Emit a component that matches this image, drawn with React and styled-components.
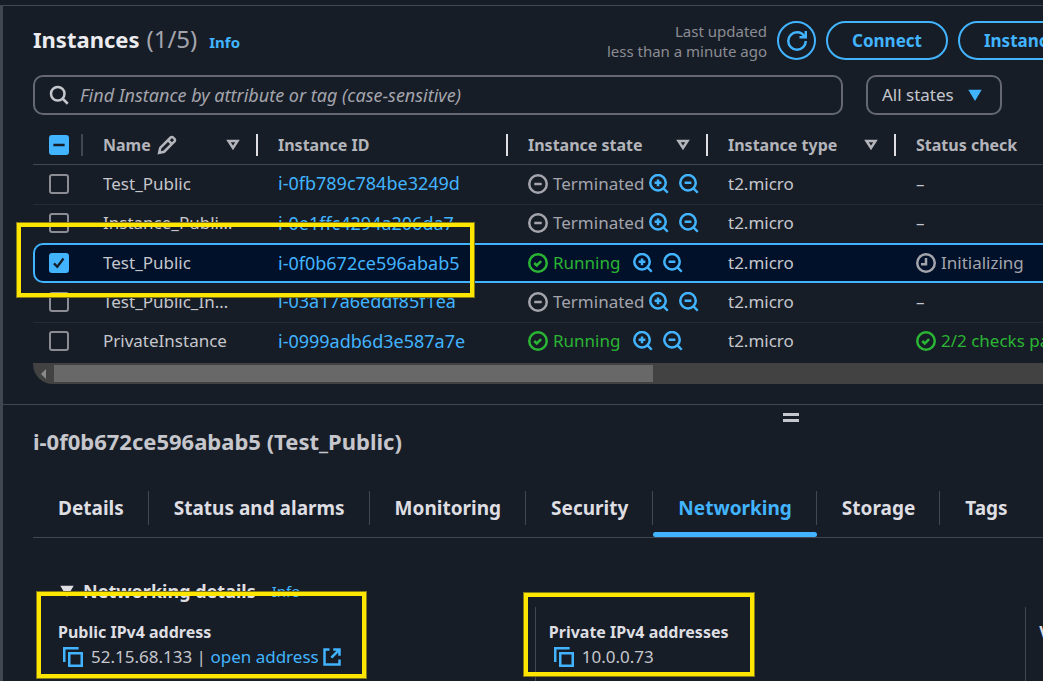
import React from "react";
import styled, { createGlobalStyle, css } from "styled-components";

const c = {
  bg: "#161d26",
  line: "#424650",
  rowLine: "#232b37",
  text: "#c6c6cd",
  strong: "#dedee3",
  muted: "#a4a4ad",
  blue: "#42b4ff",
  green: "#2bb534",
  control: "#656871",
  selected: "#001129",
  mark: "#ffe600",
};

const GlobalStyle = createGlobalStyle`
  *, *::before, *::after { box-sizing: border-box; }
  body {
    margin: 0;
    background: ${c.bg};
    color: ${c.text};
    font-family: "Noto Sans", "Open Sans", sans-serif;
    font-size: 17px;
    line-height: 24px;
    overflow: hidden;
  }
  button, input, select { font: inherit; color: inherit; }
  h1, h2, h3, dl, dt, dd { margin: 0; }
  a { color: ${c.blue}; text-decoration: none; }
`;

/* ---------- icons ---------- */

const Svg = styled.svg`
  display: block;
  flex: none;
  width: ${(p) => p.$size || 20}px;
  height: ${(p) => p.$size || 20}px;
  fill: none;
  stroke: currentColor;
  stroke-width: 2;
  color: ${(p) => p.$color || "inherit"};
`;

const shapes = {
  search: (
    <>
      <circle cx="7" cy="7" r="5.4" />
      <path d="m15 15-4.2-4.2" />
    </>
  ),
  refresh: (
    <>
      <path d="M15 8c0 3.87-3.13 7-7 7s-7-3.13-7-7 3.13-7 7-7c2.79 0 5.2 1.63 6.33 4" />
      <path d="M10 5h5V0" />
    </>
  ),
  edit: (
    <>
      <path d="m1.7 14.3.9-4L10.9 2a1.4 1.4 0 0 1 2 0l1.1 1.1a1.4 1.4 0 0 1 0 2L5.7 13.4Z" />
      <path d="m8.9 4.2 2.9 2.9" />
    </>
  ),
  zoomIn: (
    <>
      <circle cx="7.2" cy="7" r="6.2" />
      <path d="m15 15-3.4-3.5M7.2 4.3v5.4M4.500 7h5.4" />
    </>
  ),
  zoomOut: (
    <>
      <circle cx="7.2" cy="7" r="6.2" />
      <path d="m15 15-3.4-3.5M4.5 7h5.4" />
    </>
  ),
  stopped: (
    <>
      <circle cx="8" cy="8" r="7" />
      <path d="M11 8H5" />
    </>
  ),
  success: (
    <>
      <circle cx="8" cy="8" r="7" />
      <path d="m5 8 2 2 3.521-3.521" />
    </>
  ),
  pending: (
    <>
      <circle cx="8" cy="8" r="7" />
      <path d="M8 4v5H4" />
    </>
  ),
  copy: (
    <>
      <path d="M15 5H5v10h10V5Z" />
      <path d="M12.5 1H1v11" />
    </>
  ),
  external: (
    <>
      <path d="M6 2H2v12h12v-4" />
      <path d="M9 2h5v5M7.5 8.5l6-6" />
    </>
  ),
  caret: <path d="M4.4 4.8h7.2L8 10.3Z" />,
  caretFilled: <path d="M4.4 4.8h7.2L8 10.8Z" fill="currentColor" />,
  tick: <path d="m3.5 8.3 3 3 5.5-7.3" />,
  dash: <path d="M3.5 8h9" />,
};

const Icon = ({ name, size, color }) => (
  <Svg viewBox="0 0 16 16" aria-hidden="true" $size={size} $color={color}>
    {shapes[name]}
  </Svg>
);

/* ---------- frame ---------- */

const Page = styled.div`
  position: relative;
  min-height: 100vh;
  padding-top: 5px;
  overflow: hidden;
`;

const Shell = styled.main`
  min-height: calc(100vh - 5px);
  border-top: 1px solid ${c.line};
  border-left: 3px solid ${c.line};
`;

const ListPanel = styled.section`
  padding: 15px 0 20px 30px;
`;

const Header = styled.header`
  display: flex;
  gap: 10px;
  height: 39px;
`;

const Lead = styled.div`
  flex: none;
  width: calc(100% - 276px);
  display: flex;
  align-items: center;
  justify-content: space-between;
`;

const Title = styled.h1`
  display: flex;
  align-items: baseline;
  font-size: 22px;
  line-height: 32px;
  color: #ebebf0;
`;

const Count = styled.span`
  margin-left: 7px;
  font-size: 24px;
  font-weight: 400;
  color: ${c.muted};
`;

const Info = styled.a`
  margin-left: ${(p) => (p.$light ? 16 : 12)}px;
  font-size: 15px;
  font-weight: ${(p) => (p.$light ? 400 : 700)};
`;

const Updated = styled.p`
  margin: 0;
  font-size: 15px;
  line-height: 20px;
  text-align: right;
  color: #8c8c94;
`;

const Button = styled.button`
  flex: none;
  display: flex;
  align-items: center;
  justify-content: center;
  height: 39px;
  padding: ${(p) => (p.$round ? "0" : "0 24px")};
  width: ${(p) => (p.$round ? "39px" : "auto")};
  border: 2px solid ${c.blue};
  border-radius: 20px;
  background: transparent;
  color: ${c.blue};
  font-weight: 700;
  white-space: nowrap;
`;

const Filters = styled.div`
  display: flex;
  gap: 23px;
  margin: 15px 41px 0 0;
`;

const field = css`
  height: 40px;
  border: 2px solid ${c.control};
  border-radius: 10px;
`;

const SearchBox = styled.label`
  ${field}
  flex: 1;
  display: flex;
  align-items: center;
  gap: 11px;
  padding: 0 14px;
`;

const SearchInput = styled.input`
  flex: 1;
  min-width: 0;
  padding: 0;
  border: 0;
  outline: 0;
  background: transparent;
  font-size: 18px;
  &::placeholder {
    color: ${c.muted};
    font-style: italic;
    opacity: 1;
  }
`;

const SelectBox = styled.label`
  display: grid;
  align-items: center;
  width: 136px;
  > * { grid-area: 1 / 1; }
  > svg {
    justify-self: end;
    margin-right: 17px;
    pointer-events: none;
  }
`;

const Select = styled.select`
  ${field}
  appearance: none;
  width: 100%;
  padding: 0 14px;
  background: transparent;
`;

/* ---------- table ---------- */

const TableWrap = styled.div`
  margin-top: 10px;
  overflow: hidden;
`;

const Table = styled.table`
  width: 1200px;
  table-layout: fixed;
  border-collapse: separate;
  border-spacing: 0;
  text-align: left;
`;

const Col = styled.col`
  width: ${(p) => (p.$w ? `${p.$w}px` : "auto")};
`;

const Th = styled.th`
  height: 40px;
  padding: 0;
  border-bottom: 1px solid ${c.line};
  color: #b4b4bb;
  font-size: 16px;
`;

const HeadCell = styled.div`
  display: flex;
  align-items: center;
  height: 22px;
  padding-left: ${(p) => (p.$tick ? 16 : 20)}px;
  padding-right: 13px;
  border-right: 2px solid ${(p) => p.$edge || "transparent"};
  > svg:last-child:not(:only-child) { margin-left: auto; }
`;

const HeadText = styled.span`
  margin-right: 6px;
`;

const Row = styled.tr`
  > td {
    height: ${(p) => (p.$selected ? 40 : 39)}px;
    padding: 0 0 2px 20px;
    border-top: ${(p) => (p.$lined ? `1px solid ${c.rowLine}` : "0")};
    white-space: nowrap;
  }
  > td:first-child { padding-left: 16px; }
  ${(p) =>
    p.$selected &&
    css`
      > td {
        padding-bottom: 0;
        background: ${c.selected};
        border-top: 2px solid ${c.blue};
        border-bottom: 2px solid ${c.blue};
      }
      > td:first-child {
        padding-left: 14px;
        border-left: 2px solid ${c.blue};
        border-radius: 10px 0 0 10px;
      }
    `}
`;

const CheckBox = styled.label`
  display: grid;
  width: 20px;
  place-items: center;
  color: ${c.bg};
  > * { grid-area: 1 / 1; }
  > svg { pointer-events: none; }
`;

const CheckInput = styled.input`
  appearance: none;
  width: 20px;
  height: 20px;
  margin: 0;
  border: 2px solid #8c8c94;
  border-radius: 3px;
  ${(p) =>
    p.$filled &&
    css`
      border-color: ${c.blue};
      background: ${c.blue};
    `}
`;

const Name = styled.div`
  width: 132px;
  overflow: hidden;
  text-overflow: ellipsis;
`;

const IdLink = styled.a`
  font-size: 18px;
`;

const StateCell = styled.div`
  display: flex;
  align-items: center;
  gap: ${(p) => (p.$wide ? 13 : 5)}px;
`;

const Status = styled.span`
  display: flex;
  align-items: center;
  gap: 5px;
  color: ${(p) => p.$color};
`;

const Zooms = styled.span`
  display: flex;
  gap: 10px;
`;

const IconButton = styled.button`
  padding: 0;
  border: 0;
  background: transparent;
  color: ${c.blue};
`;

const Scrollbar = styled.div`
  display: flex;
  height: 21px;
  margin-top: 2px;
  padding: 2px 0;
  border-bottom-left-radius: 20px;
  background: #424242;
`;

const ScrollArrow = styled.div`
  width: 21px;
  display: grid;
  align-items: center;
  justify-items: end;
  padding-right: 8px;
  &::before {
    content: "";
    border: 5px solid transparent;
    border-left-width: 0;
    border-right-color: #8a8a8a;
  }
`;

const Thumb = styled.div`
  flex: 20;
  background: #686868;
`;

const TrackRest = styled.div`
  flex: 13;
`;

/* ---------- details panel ---------- */

const Split = styled.section`
  border-top: 1px solid ${c.line};
`;

const Handle = styled.div`
  width: 16px;
  height: 9px;
  margin: 8px 0 0 75%;
  border: solid ${c.text};
  border-width: 3px 0;
`;

const SplitTitle = styled.h2`
  margin: 3px 0 0 30px;
  font-size: 22px;
  line-height: 32px;
`;

const Tabs = styled.div`
  display: flex;
  margin: 22px 0 0 30px;
  border-bottom: 1px solid ${c.line};
  overflow: hidden;
`;

const Tab = styled.button`
  flex: none;
  display: flex;
  flex-direction: column;
  padding: 12px 0 0;
  border: 0;
  background: transparent;
  color: ${(p) => (p.$active ? c.blue : c.strong)};
  font-size: 19px;
  font-weight: 700;
  white-space: nowrap;
  &::after {
    content: "";
    width: 100%;
    height: 5px;
    margin-top: 7px;
    border-radius: 3px;
    background: ${(p) => (p.$active ? c.blue : "transparent")};
  }
`;

const TabText = styled.span`
  padding: 5px 24px 5px 25px;
  border-right: 1px solid ${(p) => (p.$last ? "transparent" : c.line)};
`;

const DetailsHead = styled.div`
  display: flex;
  align-items: center;
  margin: 39px 0 0 54px;
  color: ${c.strong};
`;

const DetailsTitle = styled.h3`
  margin-left: 6px;
  font-size: 18px;
  line-height: 28px;
`;

const Facts = styled.dl`
  display: flex;
  margin: 2px 0 0 55px;
`;

const Fact = styled.div`
  flex: none;
  width: ${(p) => (p.$first ? "calc(48% + 4px)" : "calc(50% - 2px)")};
  height: 90px;
  padding: 13px 0 0 ${(p) => (p.$first ? 0 : 13)}px;
  border-left: ${(p) => (p.$first ? 0 : 1)}px solid ${c.line};
  dt {
    font-size: 16px;
    font-weight: 700;
    color: ${c.strong};
    line-height: 24px;
  }
  dd {
    display: flex;
    align-items: center;
    gap: 3px;
    padding-left: 5px;
    line-height: 26px;
  }
`;

const FactValue = styled.span`
  margin-left: 5px;
`;

/* Highlight frame laid over the console. */
const Marker = styled.div`
  position: absolute;
  left: ${(p) => p.$x}px;
  top: ${(p) => p.$y}px;
  width: ${(p) => p.$w}px;
  height: ${(p) => p.$h}px;
  border: 4px solid ${c.mark};
  outline: 1px solid #857a14;
  pointer-events: none;
`;

const instances = [
  { name: "Test_Public", id: "i-0fb789c784be3249d", check: "none" },
  { name: "Instance_PublicSubnet", id: "i-0e1ffc4294a206da7", check: "none", lined: true },
  { name: "Test_Public", id: "i-0f0b672ce596abab5", running: true, check: "init", selected: true },
  { name: "Test_Public_Instance", id: "i-03a17a6eddf85f1ea", check: "none" },
  { name: "PrivateInstance", id: "i-0999adb6d3e587a7e", running: true, check: "passed", lined: true },
];

const checks = {
  none: "–",
  init: (
    <Status $color={c.muted}>
      <Icon name="pending" />
      Initializing
    </Status>
  ),
  passed: (
    <Status $color={c.green}>
      <Icon name="success" />
      2/2 checks passed
    </Status>
  ),
};

const tabs = ["Details", "Status and alarms", "Monitoring", "Security", "Networking", "Storage", "Tags"];

const InstanceRow = ({ item }) => (
  <Row $selected={item.selected} $lined={item.lined}>
    <td>
      <CheckBox>
        <CheckInput
          type="checkbox"
          aria-label={`Select ${item.id}`}
          defaultChecked={item.selected}
          $filled={item.selected}
        />
        {item.selected && <Icon name="tick" size={18} />}
      </CheckBox>
    </td>
    <td>
      <Name>{item.name}</Name>
    </td>
    <td>
      <IdLink href="#instance">{item.id}</IdLink>
    </td>
    <td>
      <StateCell $wide={item.running}>
        <Status $color={item.running ? c.green : c.muted}>
          <Icon name={item.running ? "success" : "stopped"} />
          {item.running ? "Running" : "Terminated"}
        </Status>
        <Zooms>
          <IconButton aria-label="Include state in filter">
            <Icon name="zoomIn" />
          </IconButton>
          <IconButton aria-label="Exclude state from filter">
            <Icon name="zoomOut" />
          </IconButton>
        </Zooms>
      </StateCell>
    </td>
    <td>t2.micro</td>
    <td>{checks[item.check]}</td>
  </Row>
);

export default function App() {
  return (
    <Page>
      <GlobalStyle />
      <Shell>
        <ListPanel>
          <Header>
            <Lead>
              <Title>
                Instances <Count>(1/5)</Count>
                <Info href="#info">Info</Info>
              </Title>
              <Updated>
                Last updated
                <br />
                less than a minute ago
              </Updated>
            </Lead>
            <Button $round aria-label="Refresh">
              <Icon name="refresh" />
            </Button>
            <Button>Connect</Button>
            <Button>Instance state</Button>
          </Header>

          <Filters>
            <SearchBox>
              <Icon name="search" color={c.text} />
              <SearchInput
                type="text"
                aria-label="Find Instance"
                placeholder="Find Instance by attribute or tag (case-sensitive)"
              />
            </SearchBox>
            <SelectBox>
              <Select aria-label="Instance states">
                <option>All states</option>
              </Select>
              <Icon name="caretFilled" color={c.blue} />
            </SelectBox>
          </Filters>

          <TableWrap>
            <Table>
              <colgroup>
                <Col $w={50} />
                <Col $w={175} />
                <Col $w={250} />
                <Col $w={200} />
                <Col $w={188} />
                <Col />
              </colgroup>
              <thead>
                <tr>
                  <Th>
                    <HeadCell $tick $edge={c.line}>
                      <CheckBox>
                        <CheckInput type="checkbox" aria-label="Select all" $filled />
                        <Icon name="dash" />
                      </CheckBox>
                    </HeadCell>
                  </Th>
                  <Th>
                    <HeadCell $edge={c.strong}>
                      <HeadText>Name</HeadText>
                      <Icon name="edit" />
                      <Icon name="caret" />
                    </HeadCell>
                  </Th>
                  <Th>
                    <HeadCell $edge={c.strong}>Instance ID</HeadCell>
                  </Th>
                  <Th>
                    <HeadCell $edge={c.strong}>
                      <HeadText>Instance state</HeadText>
                      <Icon name="caret" />
                    </HeadCell>
                  </Th>
                  <Th>
                    <HeadCell $edge={c.strong}>
                      <HeadText>Instance type</HeadText>
                      <Icon name="caret" />
                    </HeadCell>
                  </Th>
                  <Th>
                    <HeadCell>Status check</HeadCell>
                  </Th>
                </tr>
              </thead>
              <tbody>
                {instances.map((item) => (
                  <InstanceRow key={item.id} item={item} />
                ))}
              </tbody>
            </Table>
          </TableWrap>
          <Scrollbar>
            <ScrollArrow />
            <Thumb />
            <TrackRest />
          </Scrollbar>
        </ListPanel>

        <Split>
          <Handle />
          <SplitTitle>i-0f0b672ce596abab5 (Test_Public)</SplitTitle>
          <Tabs role="tablist">
            {tabs.map((label) => (
              <Tab key={label} role="tab" aria-selected={label === "Networking"} $active={label === "Networking"}>
                <TabText $last={label === "Tags"}>{label}</TabText>
              </Tab>
            ))}
          </Tabs>
          <DetailsHead>
            <Icon name="caretFilled" />
            <DetailsTitle>Networking details</DetailsTitle>
            <Info href="#info" $light>
              Info
            </Info>
          </DetailsHead>
          <Facts>
            <Fact $first>
              <dt>Public IPv4 address</dt>
              <dd>
                <Icon name="copy" color={c.blue} />
                <FactValue>
                  52.15.68.133 | <a href="#open">open address</a>
                </FactValue>
                <Icon name="external" color={c.blue} />
              </dd>
            </Fact>
            <Fact>
              <dt>Private IPv4 addresses</dt>
              <dd>
                <Icon name="copy" color={c.blue} />
                <FactValue>10.0.0.73</FactValue>
              </dd>
            </Fact>
            <Fact>
              <dt>VPC ID</dt>
            </Fact>
          </Facts>
        </Split>
      </Shell>
      <Marker $x={17} $y={223} $w={457} $h={74} />
      <Marker $x={37} $y={592} $w={329} $h={86} />
      <Marker $x={524} $y={593} $w={230} $h={83} />
    </Page>
  );
}
